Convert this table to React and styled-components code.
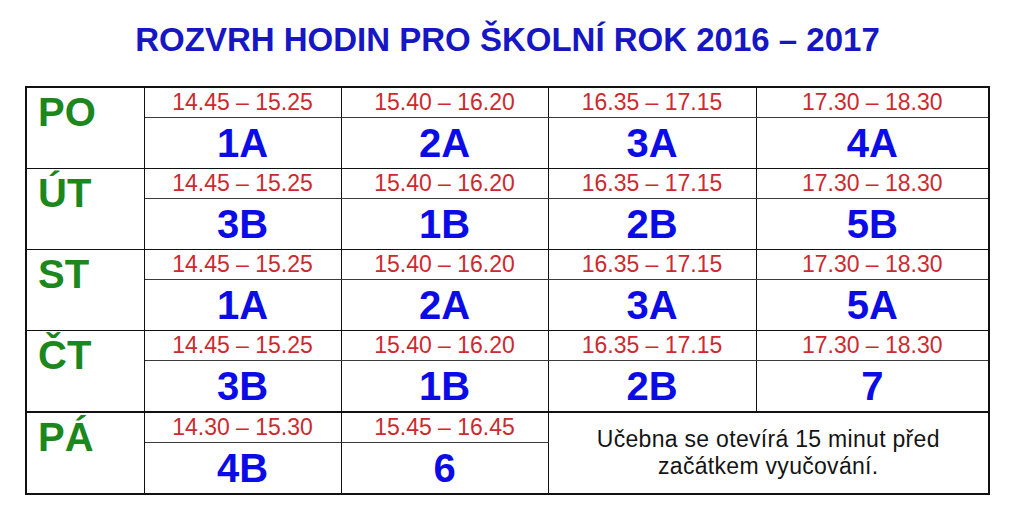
import styled, { createGlobalStyle } from "styled-components";

const GlobalStyle = createGlobalStyle`
  body {
    margin: 0;
    background: #ffffff;
    font-family: "Liberation Sans", Arial, sans-serif;
  }
`;

const Page = styled.div`
  width: 1015px;
  height: 528px;
  padding-top: 21px;
  box-sizing: border-box;
`;

const Title = styled.h1`
  margin: 0 0 27px;
  text-align: center;
  font-size: 33px;
  line-height: 38px;
  font-weight: 700;
  color: #1616c4;
`;

const Table = styled.table`
  margin-left: 25px;
  width: 963px;
  table-layout: fixed;
  border-collapse: collapse;
  border: 2px solid #111;
`;

const DayCell = styled.td`
  vertical-align: top;
  padding: 4px 0 0 11px;
  font-size: 40px;
  line-height: 40px;
  font-weight: 700;
  color: #1c871c;
  border: 1px solid #111;
  border-bottom: ${(p) => (p.$last ? "2px" : "1px")} solid #111;
`;

const TimeCell = styled.td`
  height: 29px;
  padding: 0;
  text-align: center;
  vertical-align: middle;
  font-size: 23px;
  line-height: 29px;
  color: #cc2a2e;
  border-left: 1px solid #111;
  border-right: 1px solid #111;
  border-top: 1px solid #111;
  border-bottom: 1px solid #3a3a3a;
`;

const ClassCell = styled.td`
  height: 50px;
  padding: 0;
  text-align: center;
  vertical-align: middle;
  font-size: 40px;
  line-height: 44px;
  font-weight: 700;
  color: #0b0be8;
  border-left: 1px solid #111;
  border-right: 1px solid #111;
  border-bottom: ${(p) => (p.$last ? "2px" : "1px")} solid #111;
`;

const NoteCell = styled.td`
  padding: 0;
  text-align: center;
  vertical-align: middle;
  font-size: 23px;
  line-height: 27px;
  letter-spacing: 0.3px;
  color: #141414;
  border: 1px solid #111;
`;

const days = [
  {
    day: "PO",
    times: ["14.45 – 15.25", "15.40 – 16.20", "16.35 – 17.15", "17.30 – 18.30"],
    classes: ["1A", "2A", "3A", "4A"],
  },
  {
    day: "ÚT",
    times: ["14.45 – 15.25", "15.40 – 16.20", "16.35 – 17.15", "17.30 – 18.30"],
    classes: ["3B", "1B", "2B", "5B"],
  },
  {
    day: "ST",
    times: ["14.45 – 15.25", "15.40 – 16.20", "16.35 – 17.15", "17.30 – 18.30"],
    classes: ["1A", "2A", "3A", "5A"],
  },
  {
    day: "ČT",
    times: ["14.45 – 15.25", "15.40 – 16.20", "16.35 – 17.15", "17.30 – 18.30"],
    classes: ["3B", "1B", "2B", "7"],
    thickBottom: true,
  },
];

const App = () => (
  <Page>
    <GlobalStyle />
    <Title>ROZVRH HODIN PRO ŠKOLNÍ ROK 2016 – 2017</Title>
    <Table>
      <colgroup>
        <col style={{ width: 118 }} />
        <col style={{ width: 197 }} />
        <col style={{ width: 207 }} />
        <col style={{ width: 208 }} />
        <col style={{ width: 233 }} />
      </colgroup>
      <tbody>
        {days.map((d) => [
          <tr key={d.day + "-t"}>
            <DayCell rowSpan={2} $last={d.thickBottom}>
              {d.day}
            </DayCell>
            {d.times.map((t, i) => (
              <TimeCell key={i}>{t}</TimeCell>
            ))}
          </tr>,
          <tr key={d.day + "-c"}>
            {d.classes.map((c, i) => (
              <ClassCell key={i} $last={d.thickBottom}>
                {c}
              </ClassCell>
            ))}
          </tr>,
        ])}
        <tr>
          <DayCell rowSpan={2}>PÁ</DayCell>
          <TimeCell>14.30 – 15.30</TimeCell>
          <TimeCell>15.45 – 16.45</TimeCell>
          <NoteCell colSpan={2} rowSpan={2}>
            Učebna se otevírá 15 minut před
            <br />
            začátkem vyučování.
          </NoteCell>
        </tr>
        <tr>
          <ClassCell>4B</ClassCell>
          <ClassCell>6</ClassCell>
        </tr>
      </tbody>
    </Table>
  </Page>
);

export default App;
